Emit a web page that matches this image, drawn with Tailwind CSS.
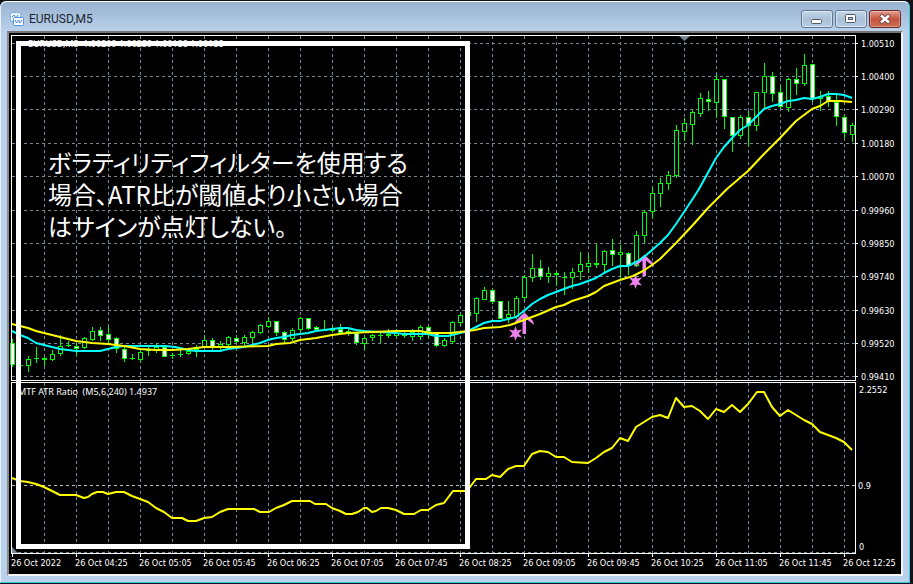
<!DOCTYPE html>
<html lang="ja">

<head>
    <meta charset="utf-8">
    <meta name="viewport" content="width=device-width">
    <script src="https://cdn.jsdelivr.net/npm/@tailwindcss/browser@4"></script>
    <title>EURUSD,M5</title>
</head>

<body class="bg-[#101418] pt-px pr-[3px] pb-px">
    <div class="rounded-t-md border-t border-l border-t-white border-l-[#e8f0f8] border-r border-b border-r-[#35c8e0] border-b-[#35c8e0] bg-[#b9d1ea]">
        <header class="flex items-center justify-between rounded-t-md bg-linear-to-b from-[#98b3d1] to-[#b9d1ea] pt-2 pr-2 pb-[3px] pl-[9px]">
            <div class="flex items-center gap-1">
                <svg class="h-[15px] w-[15px]" viewBox="0 0 15 15" fill="none">
                    <rect x="0.5" y="0.5" width="10" height="9" rx="1" fill="#eaf4ff" stroke="#5b9be8" stroke-dasharray="2 1" />
                    <path d="M2 5l2-2 2 3 2-3" stroke="#4b86d8" />
                    <rect x="3.5" y="5.5" width="10" height="8" rx="1" fill="#ffffff" stroke="#4f94ea" />
                    <path d="M5 8l1.500 3 2-3 1.500 3 2-3" stroke="#4b86d8" />
                </svg>
                <h1 class="font-['Roboto','Noto_Sans',sans-serif] text-xs leading-[18px] text-[#1c2430]">EURUSD,M5</h1>
            </div>
            <div class="flex gap-0.5">
                <button type="button" aria-label="最小化" class="flex h-[18px] w-8 items-center justify-center rounded-[3px] border border-[#60768f] bg-linear-to-b from-[#c5d8ea] via-[#a9c0d8] to-[#b6cce2] inset-ring inset-ring-white/50">
                    <svg class="h-3 w-3" viewBox="0 0 12 12"><rect x="0.5" y="6.5" width="10" height="4" rx="1" fill="#fff" stroke="#535a66" /></svg>
                </button>
                <button type="button" aria-label="最大化" class="flex h-[18px] w-8 items-center justify-center rounded-[3px] border border-[#60768f] bg-linear-to-b from-[#c5d8ea] via-[#a9c0d8] to-[#b6cce2] inset-ring inset-ring-white/50">
                    <svg class="h-3 w-3" viewBox="0 0 12 12"><rect x="0.5" y="1.500" width="10" height="8" rx="1" fill="#fff" stroke="#535a66" /><rect x="3.500" y="4.500" width="4" height="2" fill="#a9c0d8" stroke="#535a66" /></svg>
                </button>
                <button type="button" aria-label="閉じる" class="flex h-[18px] w-8 items-center justify-center rounded-[3px] border border-[#6b2a26] bg-linear-to-b from-[#e0a091] via-[#c4533d] to-[#cb6d51] inset-ring inset-ring-white/30">
                    <svg class="h-3 w-3" viewBox="0 0 12 12" fill="none"><path d="M1.500 2l9 8M10.500 2l-9 8" stroke="#5a3a3c" stroke-width="4" /><path d="M2 2.500l8 7M10 2.500l-8 7" stroke="#fff" stroke-width="2.600" /></svg>
                </button>
            </div>
        </header>

        <main class="px-1.5 pb-1.5">
            <div class="border-2 border-t-[#747474] border-r-[#f4f4f4] border-b-[#f4f4f4] border-l-[#8a8a8a] bg-black">
                <svg class="block h-auto w-full" viewBox="9 33 892 541" fill="none" font-family="'DejaVu Sans Condensed','Noto Sans',sans-serif" font-size="9">
                    <g id="grid" stroke="#778899" stroke-dasharray="3 3" shape-rendering="crispEdges"></g>
                    <path d="M12 485.500H855" stroke="#c0c0c0" stroke-dasharray="3 3" shape-rendering="crispEdges" />
                    <path d="M679 36h11l-5.500 5zM12 547v6h6z" fill="#778899" />

                    <g id="candles" stroke="#00ff00" shape-rendering="crispEdges"></g>

                    <!-- サイン -->
                    <g fill="#ee82ee">
                        <path id="arrow" d="M524.500 312.500l4.500 4.500 4 4 1 4-5-4-3-2.500v15.500h-3.500v-15.500l-3 2.500-5 4 1-4 4-4z" />
                        <use href="#arrow" x="120" y="-58" />
                        <path id="star" d="M515.500 326l1.500 4.500 5-1-3.500 4 3.500 4-5-1-1.500 4.500-1.500-4.500-5 1 3.500-4-3.500-4 5 1z" />
                        <use href="#star" x="120" y="-52" />
                    </g>

                    <g id="lines" stroke-width="2" stroke-linejoin="round"></g>

                    <!-- 枠 -->
                    <g stroke="#fff" shape-rendering="crispEdges">
                        <path d="M11.500 380.500V35.500H855.500V380.500zM11.500 553.500V382.500H855.500V553.500z" />
                        <path id="ticks" />
                    </g>

                    <g id="labels" fill="#fff"></g>
                    <g class="font-['Noto_Sans',sans-serif]" fill="#fff">
                        <text x="28" y="47" xml:space="preserve">EURUSD,M5  1.00209 1.00259 1.00188 1.00188</text>
                        <text x="18" y="395" xml:space="preserve">MTF ATR Ratio  (M5,6,240) 1.4937</text>
                    </g>

                    <!-- 注釈 -->
                    <rect x="18.500" y="43.500" width="449" height="503" stroke="#fff" stroke-width="5" shape-rendering="crispEdges" />
                    <g class="font-['Noto_Sans_CJK_JP',sans-serif] text-[24px] [font-feature-settings:'palt']" fill="#fff">
                        <text x="48" y="172">ボラティリティフィルターを使用する</text>
                        <text x="48" y="204">場合、ATR比が閾値より小さい場合</text>
                        <text x="48" y="236">はサインが点灯しない。</text>
                    </g>
                </svg>
            </div>
        </main>
    </div>

    <script>
        // [高値, 実体上, 実体下, 安値, 陰線なら1]
        const candles = [
            [339, 343, 365, 367, 1], [365, 365, 366, 366, 0], [356, 359, 366, 372, 0], [347, 358, 359, 363, 0], [357, 358, 360, 366, 0],
            [350, 354, 360, 361, 0], [335, 346, 354, 356, 0], [341, 345, 346, 347, 0], [343, 346, 349, 355, 1], [337, 338, 348, 349, 0],
            [327, 331, 340, 341, 0], [327, 330, 336, 341, 1], [327, 334, 340, 343, 1], [337, 338, 349, 353, 1], [347, 349, 359, 362, 1],
            [354, 358, 359, 360, 0], [350, 352, 360, 362, 0], [347, 349, 351, 356, 0], [343, 347, 351, 353, 0], [346, 347, 357, 357, 1],
            [353, 355, 356, 359, 0], [350, 354, 355, 357, 0], [350, 351, 354, 355, 0], [345, 347, 350, 357, 0], [335, 340, 347, 348, 0],
            [338, 340, 348, 350, 1], [341, 344, 348, 352, 0], [336, 337, 345, 346, 0], [335, 338, 342, 343, 1], [335, 337, 343, 345, 0],
            [331, 332, 338, 343, 0], [324, 325, 333, 334, 0], [317, 321, 327, 328, 0], [321, 321, 333, 336, 1], [331, 332, 340, 343, 1],
            [328, 330, 339, 341, 0], [317, 318, 330, 332, 0], [318, 318, 329, 330, 1], [326, 327, 330, 331, 1], [320, 330, 331, 331, 0],
            [326, 328, 331, 332, 0], [324, 329, 333, 334, 1], [329, 331, 333, 336, 0], [333, 333, 343, 345, 1], [335, 338, 344, 350, 0],
            [334, 335, 338, 341, 0], [333, 335, 336, 343, 0], [329, 334, 336, 338, 0], [329, 333, 336, 337, 0], [331, 333, 336, 338, 0],
            [329, 332, 337, 341, 0], [325, 327, 337, 340, 0], [326, 327, 332, 338, 1], [333, 333, 346, 347, 1], [338, 340, 346, 347, 0],
            [321, 322, 342, 344, 0], [313, 315, 323, 326, 0], [310, 312, 316, 318, 0], [297, 298, 314, 322, 0], [287, 290, 300, 300, 0],
            [289, 290, 302, 304, 1], [301, 301, 319, 319, 1], [301, 314, 318, 323, 0], [296, 298, 317, 319, 0], [275, 277, 298, 301, 0],
            [254, 268, 278, 282, 0], [260, 268, 277, 280, 1], [267, 273, 277, 283, 0], [272, 273, 275, 286, 1], [272, 277, 278, 295, 0],
            [268, 272, 278, 289, 0], [252, 264, 272, 280, 0], [255, 263, 267, 273, 0], [244, 263, 265, 268, 0], [250, 251, 265, 272, 0],
            [239, 250, 255, 266, 1], [245, 252, 255, 280, 0], [252, 253, 266, 275, 1], [231, 235, 266, 267, 0], [210, 212, 236, 243, 0],
            [187, 193, 212, 218, 0], [178, 183, 194, 207, 0], [171, 175, 184, 190, 0], [125, 130, 176, 178, 0], [118, 123, 132, 141, 0],
            [110, 112, 125, 145, 0], [93, 98, 114, 117, 0], [91, 99, 102, 111, 1], [74, 79, 103, 118, 0], [79, 79, 117, 129, 1],
            [117, 117, 136, 152, 1], [115, 117, 136, 139, 0], [111, 117, 126, 146, 1], [92, 92, 126, 131, 0], [63, 76, 93, 108, 0],
            [72, 76, 94, 102, 1], [86, 92, 107, 109, 1], [78, 79, 108, 112, 0], [68, 79, 84, 95, 1], [54, 65, 84, 86, 0],
            [64, 64, 99, 102, 1], [91, 96, 99, 111, 0], [91, 96, 102, 107, 1], [95, 102, 117, 126, 1], [115, 117, 133, 138, 1],
            [123, 125, 135, 142, 0]
        ];

        const lines = {
            '#00ffff': '12,331 20,335 28,338 36,343 44,345 52,347 60,349 68,350 76,351 100,351 108,349 116,347 124,346 165,346 175,347 180,348 188,350 196,351 220,351 228,349 236,348 244,347 252,345 260,343 268,340 276,338 284,337 292,335 300,334 308,333 316,331 324,330 332,329 340,328 348,328 356,330 364,331 380,332 396,333 404,334 428,334 436,336 448,336 452,335 460,333 468,331 476,327 484,323 492,321 500,321 508,319 516,317 524,311 532,304 540,299 548,295 556,292 564,289 572,286 580,284 588,281 596,278 604,273 612,269 620,266 628,266 636,262 644,257 652,250 660,243 668,235 676,224 684,212 692,200 699,189 710,169 716,158 724,147 732,138 740,130 748,125 756,117 764,109 772,106 780,104 788,101 796,100 804,98 812,99 820,97 828,94 836,94 844,95 852,98',
            '#ffff00': '12,324 20,326 28,328 36,331 44,333 52,335 60,337 68,339 76,341 92,343 108,344 124,346 140,349 156,350 172,350 188,349 204,347 228,347 268,346 276,344 290,343 300,340 316,338 332,335 348,333 372,332 396,331 420,331 430,333 450,333 460,332 475,330 484,328 500,327 510,325 524,320 540,314 556,307 564,305 572,301 588,296 596,292 604,286 620,280 633,276 643,271 652,265 660,259 676,243 692,226 708,208 727,189 748,171 764,154 780,138 796,121 804,115 812,109 820,106 828,101 840,101 852,102',
            // ATR比
            'yellow': '12,478 20,481 28,482 36,484 44,487 52,491 60,495 76,495 84,498 88,497 92,494 97,492 103,492 108,494 116,492 124,492 132,496 140,499 148,502 156,508 164,512 172,518 182,518 188,521 196,521 204,518 212,517 220,512 228,509 254,509 260,512 269,512 276,508 284,505 292,501 310,501 315,504 326,504 332,508 340,511 346,514 352,514 358,512 364,508 367,508 372,512 376,511 381,508 388,508 396,510 404,514 414,514 421,510 428,510 436,505 444,503 453,491 466,491 470,487 476,479 486,479 492,475 500,477 508,469 516,466 524,466 532,454 540,451 548,452 556,457 564,457 572,462 588,463 596,458 604,452 612,448 620,438 628,441 636,427 644,422 652,417 660,415 668,418 676,398 684,407 692,406 700,411 708,419 716,409 724,412 732,405 740,412 748,404 757,392 764,392 772,407 780,416 788,410 804,420 812,424 820,432 836,438 844,442 852,450'
        };

        const prices = ['1.00510', '1.00400', '1.00290', '1.00180', '1.00070', '0.99960', '0.99850', '0.99740', '0.99630', '0.99520', '0.99410'];
        const priceY = [43, 76, 109, 143, 176, 210, 243, 276, 310, 343, 376];
        const times = ['2022', '04:25', '05:05', '05:45', '06:25', '07:05', '07:45', '08:25', '09:05', '09:45', '10:25', '11:05', '11:45', '12:25'];

        const byId = (id) => document.getElementById(id);
        let grid = '', ticks = '', labels = '';

        for (let x = 44; x < 855; x += 32) {
            grid += `<path d="M${x}.5 36V380M${x}.5 383V553"/>`;
        }
        grid += '<path d="M12 552.5H855"/>';

        prices.forEach((p, i) => {
            const y = priceY[i];
            grid += `<path d="M12 ${y}.5H855"/>`;
            ticks += `M856 ${y}.5h2`;
            labels += `<text x="861" y="${y + 4}">${p}</text>`;
        });
        labels += '<text x="859" y="393">2.2552</text><text x="858" y="489">0.9</text><text x="859" y="550">0</text>';

        times.forEach((t, i) => {
            const x = 12 + i * 64;
            ticks += `M${x}.5 554v3`;
            labels += `<text x="${x - 1}" y="566">26 Oct ${t}</text>`;
        });

        byId('grid').innerHTML = grid;
        byId('ticks').setAttribute('d', ticks);
        byId('labels').innerHTML = labels;

        byId('candles').innerHTML = candles.map(([high, top, bottom, low, down], i) => {
            const x = 12 + i * 8;
            const h = bottom - top - 1;
            const body = h > 0
                ? `<rect x="${x - 2}.5" y="${top}.5" width="4" height="${h}" fill="${down ? '#fff' : '#000'}"/>`
                : `<path d="M${x - 2} ${top}.5h5"/>`;
            return `<path d="M${x}.5 ${high}V${low}"/>${body}`;
        }).join('');

        byId('lines').innerHTML = Object.entries(lines)
            .map(([color, points]) => `<polyline points="${points}" stroke="${color}"/>`).join('');
    </script>
</body>

</html>
